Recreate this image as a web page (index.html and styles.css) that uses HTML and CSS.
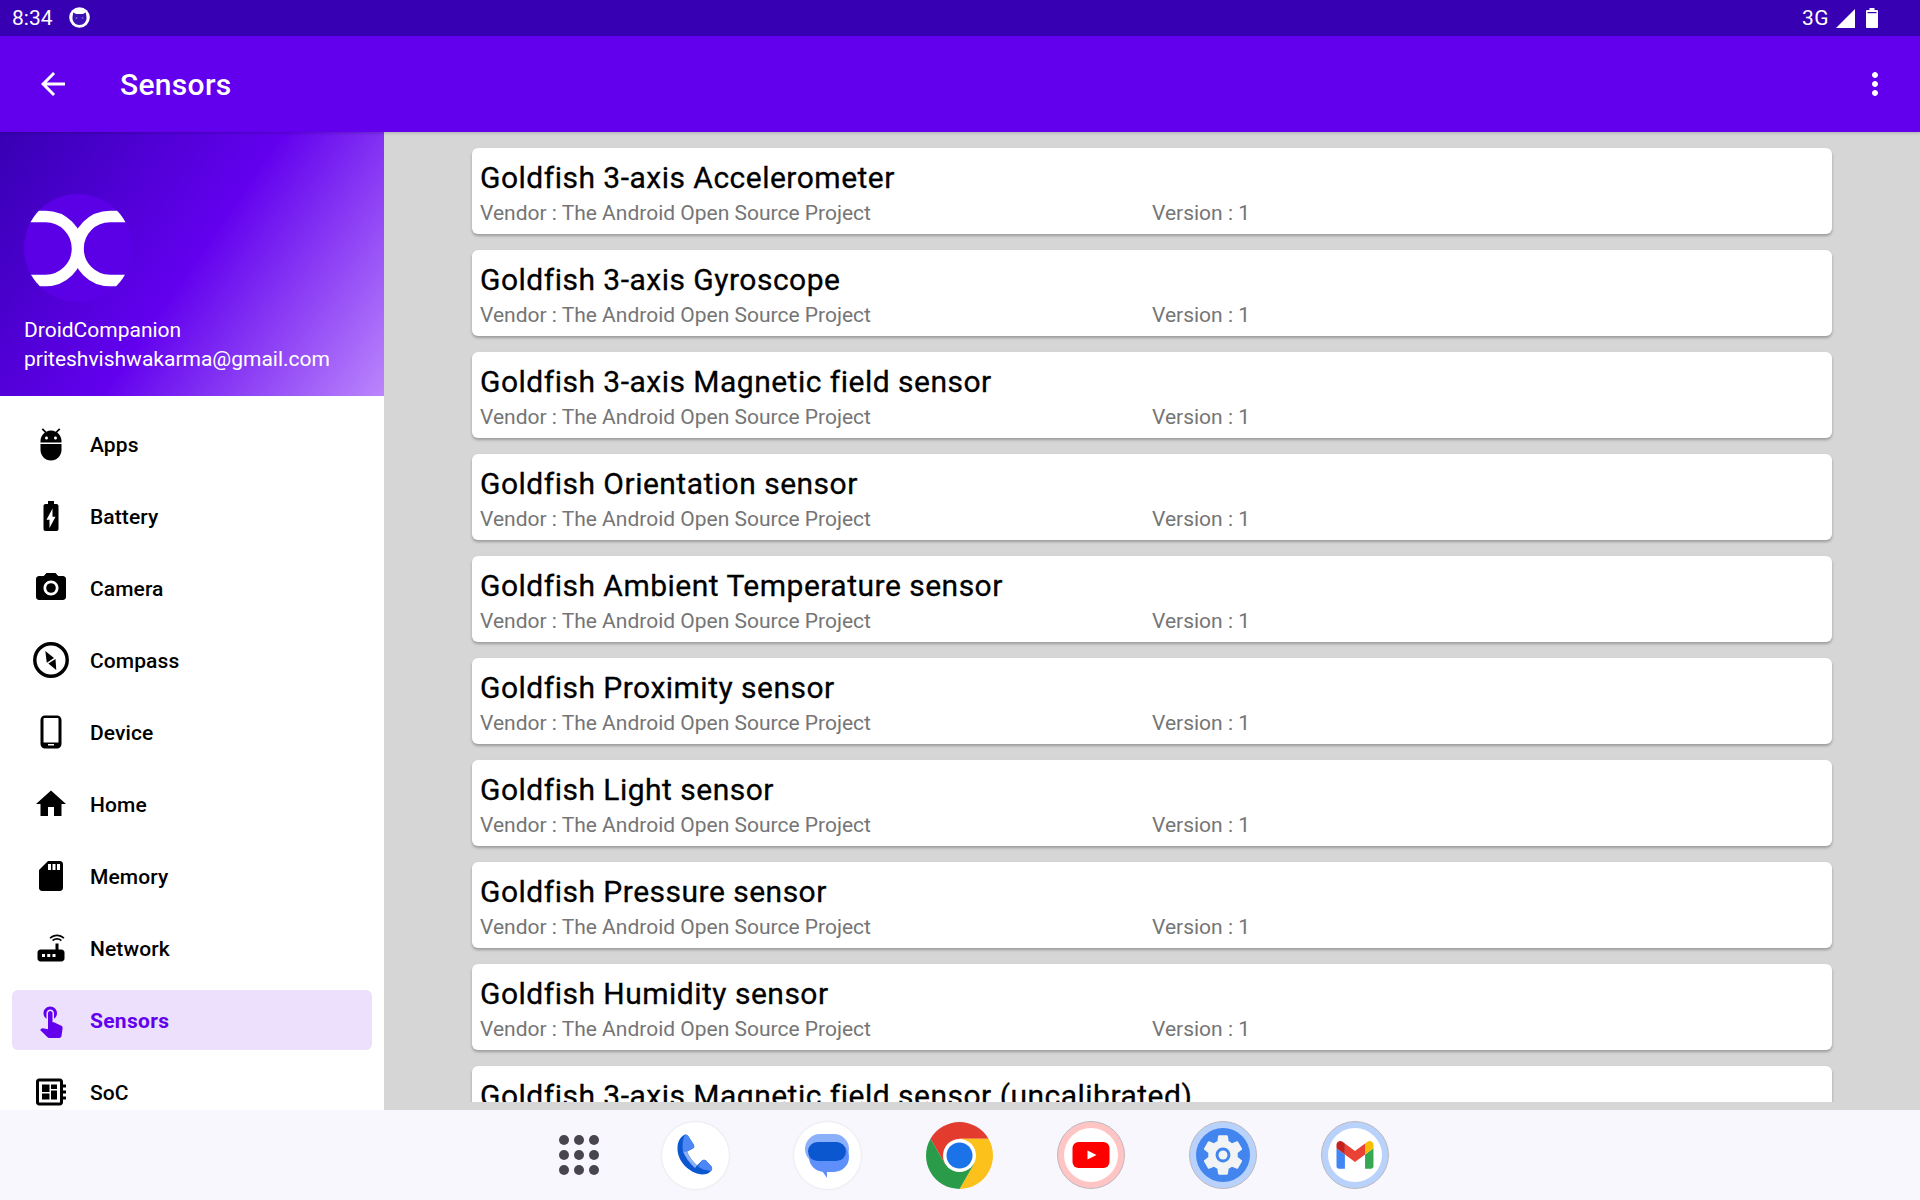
FILE: index.html
```html
<!DOCTYPE html>
<html lang="en">
<head>
<meta charset="utf-8">
<title>Sensors</title>
<link rel="stylesheet" href="styles.css">
</head>
<body>
<div class="statusbar">
  <div class="status-left">
    <span class="status-text">8:34</span>
    <svg class="status-app" viewBox="0 0 21 21"><circle cx="10.500" cy="10.500" r="10.300" fill="#fff"/><path d="M3.500 10l.7-4.500 3 1.500h6.600l3-1.500.7 4.500c.5 4.500-3 8-7 8s-7.500-3.500-7-8z" fill="#3d12b4"/><circle cx="7.500" cy="11" r="1" fill="#7a5fd0"/><circle cx="13.500" cy="11" r="1" fill="#7a5fd0"/></svg>
  </div>
  <div class="status-right">
    <span class="status-text status-net">3G</span>
    <svg class="status-signal" viewBox="0 0 19 19"><path d="M19 0v19H0z" fill="#fff"/></svg>
    <svg class="status-battery" viewBox="0 0 12 20"><path d="M3.500 0h5v2H11a1 1 0 0 1 1 1v16a1 1 0 0 1-1 1H1a1 1 0 0 1-1-1V3a1 1 0 0 1 1-1h2.500z" fill="#fff"/><rect x="1.500" y="4" width="9" height="1.200" fill="#3700b3"/></svg>
  </div>
</div>
<header class="toolbar">
  <svg class="tool-icon" viewBox="0 0 24 24"><path d="M20 11H7.830l5.590-5.590L12 4l-8 8 8 8 1.410-1.410L7.830 13H20v-2z"/></svg>
  <h1 class="tool-title">Sensors</h1>
  <svg class="tool-icon" viewBox="0 0 24 24"><path d="M12 8c1.100 0 2-.9 2-2s-.9-2-2-2-2 .9-2 2 .9 2 2 2zm0 2c-1.100 0-2 .9-2 2s.9 2 2 2 2-.9 2-2-.9-2-2-2zm0 6c-1.100 0-2 .9-2 2s.9 2 2 2 2-.9 2-2-.9-2-2-2z"/></svg>
</header>
<div class="content">
  <aside class="drawer">
    <div class="drawer-head">
      <svg class="avatar" viewBox="0 0 108 108">
        <defs><clipPath id="avatarClip"><circle cx="54" cy="54" r="54"/></clipPath></defs>
        <circle cx="54" cy="54" r="54" fill="#5b00e6"/>
        <g clip-path="url(#avatarClip)" fill="none" stroke="#fff" stroke-width="11.500">
          <path d="M-2 22.500H21.500a32 32 0 0 1 0 64H-2"/>
          <path d="M110 22.500H86a32 32 0 0 0 0 64H110"/>
        </g>
      </svg>
      <div class="head-name">DroidCompanion</div>
      <div class="head-mail">priteshvishwakarma@gmail.com</div>
    </div>
    <nav class="nav">
      <div class="nav-item"><svg class="nav-icon" viewBox="0 0 24 24"><path d="M5 16c0 3.870 3.130 7 7 7s7-3.130 7-7v-4H5v4zM16.120 4.370l2.100-2.100-.82-.83-2.300 2.310C14.160 3.280 13.120 3 12 3s-2.160.28-3.090.75L6.600 1.440l-.82.83 2.100 2.100C6.140 5.640 5 7.680 5 10v1h14v-1c0-2.320-1.140-4.360-2.880-5.630zM9 9c-.55 0-1-.45-1-1s.45-1 1-1 1 .45 1 1-.45 1-1 1zm6 0c-.55 0-1-.45-1-1s.45-1 1-1 1 .45 1 1-.45 1-1 1z"/></svg><span class="nav-label">Apps</span></div>
      <div class="nav-item"><svg class="nav-icon" viewBox="0 0 24 24"><path d="M15.670 4H14V2h-4v2H8.330C7.600 4 7 4.600 7 5.330v15.330C7 21.400 7.600 22 8.330 22h7.330c.74 0 1.340-.6 1.340-1.330V5.330C17 4.600 16.400 4 15.670 4zM11 20v-5.500H9L13 7v5.500h2L11 20z"/></svg><span class="nav-label">Battery</span></div>
      <div class="nav-item"><svg class="nav-icon" viewBox="0 0 24 24"><circle cx="12" cy="12" r="3.200"/><path d="M9 2L7.170 4H4c-1.100 0-2 .9-2 2v12c0 1.100.9 2 2 2h16c1.100 0 2-.9 2-2V6c0-1.100-.9-2-2-2h-3.170L15 2H9zm3 15c-2.760 0-5-2.240-5-5s2.240-5 5-5 5 2.240 5 5-2.240 5-5 5z"/></svg><span class="nav-label">Camera</span></div>
      <div class="nav-item"><svg class="nav-icon" viewBox="0 0 24 24"><circle cx="12" cy="12" r="10.800" fill="none" stroke="#000" stroke-width="2.300"/><path d="M8.200 6l5.800 4.600-4.800 3.200zM15.500 18.600l-5.300-4.200 4.800-3z"/></svg><span class="nav-label">Compass</span></div>
      <div class="nav-item"><svg class="nav-icon" viewBox="0 0 24 24"><path d="M16 1H8C6.340 1 5 2.340 5 4v16c0 1.660 1.340 3 3 3h8c1.660 0 3-1.340 3-3V4c0-1.660-1.340-3-3-3zm-2 20h-4v-1h4v1zm3-2H7V3.300c0-.3.300-.6.600-.6h8.800c.3 0 .6.300.6.600V19z"/></svg><span class="nav-label">Device</span></div>
      <div class="nav-item"><svg class="nav-icon" viewBox="0 0 24 24"><path d="M10 20v-6h4v6h5v-8h3L12 3 2 12h3v8z"/></svg><span class="nav-label">Home</span></div>
      <div class="nav-item"><svg class="nav-icon" viewBox="0 0 24 24"><path d="M18 2h-8L4.020 8 4 20c0 1.100.9 2 2 2h12c1.100 0 2-.9 2-2V4c0-1.100-.9-2-2-2zm-6 6h-2V4h2v4zm3 0h-2V4h2v4zm3 0h-2V4h2v4z"/></svg><span class="nav-label">Memory</span></div>
      <div class="nav-item"><svg class="nav-icon" viewBox="0 0 24 24"><path d="M20.200 5.900l.8-.8C19.600 3.700 17.800 3 16 3s-3.600.7-5 2.100l.8.8C13 4.800 14.500 4.200 16 4.200s3 .6 4.200 1.700zm-.9.8c-.9-.9-2.100-1.400-3.300-1.400s-2.400.5-3.300 1.400l.8.8c.7-.7 1.600-1 2.500-1 .9 0 1.800.3 2.500 1l.8-.8zM19 13h-2V9h-2v4H5c-1.100 0-2 .9-2 2v4c0 1.100.9 2 2 2h14c1.100 0 2-.9 2-2v-4c0-1.100-.9-2-2-2zM8 18H6v-2h2v2zm3.500 0h-2v-2h2v2zm3.500 0h-2v-2h2v2z"/></svg><span class="nav-label">Network</span></div>
      <div class="nav-item nav-active"><svg class="nav-icon" viewBox="0 0 24 24"><path d="M9 11.240V7.500C9 6.120 10.120 5 11.500 5S14 6.120 14 7.500v3.740c1.210-.81 2-2.180 2-3.740C16 5.010 13.990 3 11.500 3S7 5.010 7 7.500c0 1.560.79 2.930 2 3.740zm9.840 4.630l-4.540-2.260c-.17-.07-.35-.11-.54-.11H13v-6c0-.83-.67-1.500-1.500-1.500S10 6.670 10 7.500v10.740l-3.430-.72c-.08-.01-.15-.03-.24-.03-.31 0-.59.13-.79.33l-.79.8 4.940 4.940c.27.27.65.44 1.060.44h6.790c.75 0 1.330-.55 1.440-1.280l.75-5.270c.01-.07.02-.14.02-.2 0-.62-.38-1.160-.91-1.380z"/></svg><span class="nav-label">Sensors</span></div>
      <div class="nav-item"><svg class="nav-icon" viewBox="0 0 24 24"><path d="M22 9V7h-2V5c0-1.100-.9-2-2-2H4c-1.100 0-2 .9-2 2v14c0 1.100.9 2 2 2h14c1.100 0 2-.9 2-2v-2h2v-2h-2v-2h2v-2h-2V9h2zm-4 10H4V5h14v14zM6 13h5v4H6zm6-6h4v3h-4zM6 7h5v5H6zm6 4h4v6h-4z"/></svg><span class="nav-label">SoC</span></div>
    </nav>
  </aside>
  <main class="list">
    <article class="card"><h2 class="card-title">Goldfish 3-axis Accelerometer</h2><div class="card-meta"><span class="meta-vendor">Vendor : The Android Open Source Project</span><span>Version : 1</span></div></article>
    <article class="card"><h2 class="card-title">Goldfish 3-axis Gyroscope</h2><div class="card-meta"><span class="meta-vendor">Vendor : The Android Open Source Project</span><span>Version : 1</span></div></article>
    <article class="card"><h2 class="card-title">Goldfish 3-axis Magnetic field sensor</h2><div class="card-meta"><span class="meta-vendor">Vendor : The Android Open Source Project</span><span>Version : 1</span></div></article>
    <article class="card"><h2 class="card-title">Goldfish Orientation sensor</h2><div class="card-meta"><span class="meta-vendor">Vendor : The Android Open Source Project</span><span>Version : 1</span></div></article>
    <article class="card"><h2 class="card-title">Goldfish Ambient Temperature sensor</h2><div class="card-meta"><span class="meta-vendor">Vendor : The Android Open Source Project</span><span>Version : 1</span></div></article>
    <article class="card"><h2 class="card-title">Goldfish Proximity sensor</h2><div class="card-meta"><span class="meta-vendor">Vendor : The Android Open Source Project</span><span>Version : 1</span></div></article>
    <article class="card"><h2 class="card-title">Goldfish Light sensor</h2><div class="card-meta"><span class="meta-vendor">Vendor : The Android Open Source Project</span><span>Version : 1</span></div></article>
    <article class="card"><h2 class="card-title">Goldfish Pressure sensor</h2><div class="card-meta"><span class="meta-vendor">Vendor : The Android Open Source Project</span><span>Version : 1</span></div></article>
    <article class="card"><h2 class="card-title">Goldfish Humidity sensor</h2><div class="card-meta"><span class="meta-vendor">Vendor : The Android Open Source Project</span><span>Version : 1</span></div></article>
    <article class="card"><h2 class="card-title">Goldfish 3-axis Magnetic field sensor (uncalibrated)</h2><div class="card-meta"><span class="meta-vendor">Vendor : The Android Open Source Project</span><span>Version : 1</span></div></article>
  </main>
</div>
<footer class="dock">
  <svg class="dock-all" viewBox="0 0 40 40" fill="#49454f">
    <circle cx="5" cy="5" r="5"/><circle cx="20" cy="5" r="5"/><circle cx="35" cy="5" r="5"/>
    <circle cx="5" cy="20" r="5"/><circle cx="20" cy="20" r="5"/><circle cx="35" cy="20" r="5"/>
    <circle cx="5" cy="35" r="5"/><circle cx="20" cy="35" r="5"/><circle cx="35" cy="35" r="5"/>
  </svg>
  <svg class="dock-app dock-plain" viewBox="0 0 67 67">
    <circle cx="33.500" cy="33.500" r="33.500" fill="#fff"/>
    <path fill="#0b57d0" d="M23 12.500Q25 12.200 26.500 14.500L32 23Q33 25 31 26.500L25 29.500Q28 37 35 43.500L40 38.500Q42 37 44 38.500L49.500 44.500Q51 47 49 49Q46 52.500 40 52.500C26 51 15 38 15.500 26C15.500 20 18 15 23 12.500Z"/>
    <path fill="#4d87f6" d="M23 12.500Q25 12.200 26.500 14.500L32 23Q33 25 31 26.500L25 29.500L21 29.500Q19.500 19 23 12.500Z"/>
    <path fill="#4d87f6" d="M40 38.500Q42 37 44 38.500L49.500 44.500Q51 47 49 49L41 47.500L36 44.500Z"/>
    <path fill="#8ab0f8" d="M21 29.500L25 29.500Q28 37 35 43.500L33 46Q25 39 21 29.500Z"/>
  </svg>
  <svg class="dock-app dock-plain" viewBox="0 0 67 67">
    <circle cx="33.500" cy="33.500" r="33.500" fill="#fff"/>
    <rect x="11" y="12" width="44" height="30" rx="15" fill="#8ab0fc"/>
    <path d="M26 46h7v10z" fill="#5e8ffa"/>
    <rect x="15" y="20" width="40" height="30" rx="15" fill="#5e8ffa"/>
    <rect x="14" y="20" width="38" height="19" rx="9.500" fill="#0b57d0"/>
  </svg>
  <svg class="dock-app" viewBox="-33.500 -33.500 67 67">
    <path d="M-29 -16.750A33.500 33.500 0 0 1 29 -16.750L0 -16.750L-14.500 8.400Z" fill="#e33b2e"/>
    <path d="M29 -16.750A33.500 33.500 0 0 1 0 33.500L14.500 8.400L0 -16.750Z" fill="#fcc11a"/>
    <path d="M0 33.500A33.500 33.500 0 0 1 -29 -16.750L-14.500 8.400L14.500 8.400Z" fill="#2a9b49"/>
    <circle r="16.500" fill="#fff"/><circle r="13" fill="#1a73e8"/>
  </svg>
  <svg class="dock-app dock-ringed" viewBox="0 0 68 68">
    <circle cx="34" cy="34" r="33.500" fill="#ffc4c4" stroke="#bdb9bd"/>
    <circle cx="34" cy="34" r="27" fill="#fff"/>
    <rect x="15.500" y="21" width="37" height="26" rx="6" fill="#f00"/>
    <path d="M30.500 29.500L39.500 34l-9 4.500z" fill="#fff"/>
  </svg>
  <svg class="dock-app dock-ringed" viewBox="0 0 68 68">
    <circle cx="34" cy="34" r="33.500" fill="#b9d2fb" stroke="#bdb9bd"/>
    <circle cx="34" cy="34" r="27" fill="#4285ee"/>
    <g transform="translate(9.400 9.400) scale(2.050)"><path fill="#f1f3f4" d="M19.140 12.940c.04-.3.06-.61.06-.94 0-.32-.02-.64-.07-.94l2.030-1.580c.18-.14.23-.41.12-.61l-1.920-3.320c-.12-.22-.37-.29-.59-.22l-2.390.96c-.5-.38-1.030-.7-1.620-.94l-.36-2.540c-.04-.24-.24-.41-.48-.41h-3.840c-.24 0-.43.17-.47.41l-.36 2.540c-.59.24-1.130.57-1.620.94l-2.390-.96c-.22-.08-.47 0-.59.22L2.740 8.870c-.12.21-.08.47.12.61l2.030 1.580c-.05.3-.09.63-.09.94s.02.64.07.94l-2.030 1.580c-.18.14-.23.41-.12.61l1.920 3.320c.12.22.37.29.59.22l2.390-.96c.5.38 1.030.7 1.620.94l.36 2.540c.05.24.24.41.48.41h3.840c.24 0 .44-.17.47-.41l.36-2.540c.59-.24 1.130-.56 1.620-.94l2.390.96c.22.08.47 0 .59-.22l1.920-3.320c.12-.22.07-.47-.12-.61l-2.010-1.580zM12 15.600c-1.980 0-3.600-1.620-3.600-3.600s1.620-3.600 3.600-3.600 3.600 1.620 3.600 3.600-1.620 3.600-3.600 3.600z"/><circle cx="12" cy="12" r="2.200" fill="#f1f3f4"/></g>
  </svg>
  <svg class="dock-app dock-ringed" viewBox="0 0 68 68">
    <circle cx="34" cy="34" r="33.500" fill="#b9d2fb" stroke="#bdb9bd"/>
    <circle cx="34" cy="34" r="27" fill="#fff"/>
    <g transform="translate(15.500 20) scale(.42)" >
      <g transform="translate(-52 -42)">
        <path fill="#4285f4" d="M58 108h14V74L52 59v43c0 3.320 2.690 6 6 6"/>
        <path fill="#34a853" d="M120 108h14c3.320 0 6-2.690 6-6V59l-20 15"/>
        <path fill="#fbbc04" d="M120 48v26l20-15v-8c0-7.420-8.470-11.650-14.400-7.200"/>
        <path fill="#ea4335" d="M72 74V48l24 18 24-18v26L96 92"/>
        <path fill="#c5221f" d="M52 51v8l20 15V48l-5.600-4.200c-5.940-4.450-14.400-.22-14.400 7.200"/>
      </g>
    </g>
  </svg>
</footer>
</body>
</html>
```
FILE: styles.css
```css
* { box-sizing: border-box; margin: 0; padding: 0; }
html, body { height: 100%; }
body {
  width: 1920px;
  height: 1200px;
  display: flex;
  flex-direction: column;
  overflow: hidden;
  font-family: Roboto, "Liberation Sans", sans-serif;
  background: #d6d6d6;
}
.statusbar {
  height: 36px;
  flex: none;
  background: #3700b3;
  color: #fff;
  display: flex;
  justify-content: space-between;
  align-items: center;
  padding: 0 42px 0 12px;
}
.status-left, .status-right { display: flex; align-items: center; }
.status-text { font-size: 21px; line-height: 36px; }
.status-net { letter-spacing: .4px; }
.status-app { width: 21px; height: 21px; margin-left: 16px; margin-top: -1px; }
.status-signal { width: 19px; height: 19px; margin-left: 7px; }
.status-battery { width: 12px; height: 20px; margin-left: 11px; }
.toolbar {
  height: 96px;
  flex: none;
  background: #6200ee;
  color: #fff;
  display: flex;
  align-items: center;
  padding: 0 27px 0 35px;
  position: relative;
  z-index: 2;
  box-shadow: 0 1px 3px rgba(0,0,0,.2);
}
.tool-icon { width: 36px; height: 36px; fill: #fff; flex: none; }
.tool-title { flex: 1; margin-left: 49px; padding-top: 2px; font-size: 30px; font-weight: 500; line-height: 36px; letter-spacing: .3px; }
.content { flex: 1; min-height: 0; display: flex; }
.drawer {
  width: 384px;
  flex: none;
  background: #fff;
  display: flex;
  flex-direction: column;
  overflow: hidden;
}
.drawer-head {
  height: 264px;
  flex: none;
  padding: 62px 24px 0;
  color: #fff;
  font-size: 21px;
  line-height: 29px;
  background: linear-gradient(124.5deg, #3700b3 0%, #6200ee 50%, #bb86fc 100%);
}
.avatar { display: block; width: 108px; height: 108px; margin-bottom: 14px; }
.nav { padding: 18px 12px 0; display: flex; flex-direction: column; gap: 12px; }
.nav-item {
  height: 60px;
  flex: none;
  display: flex;
  align-items: center;
  gap: 21px;
  padding-left: 21px;
  border-radius: 6px;
  font-size: 21px;
  font-weight: 500;
  letter-spacing: .1px;
  color: #000;
}
.nav-label { padding-top: 2px; }
.nav-icon { width: 36px; height: 36px; fill: currentColor; flex: none; }
.nav-active { background: #ece0fd; color: #6200ee; font-weight: 700; letter-spacing: .3px; }
.list {
  flex: 1;
  min-width: 0;
  margin-bottom: 8px;
  padding: 16px 88px 0;
  display: flex;
  flex-direction: column;
  gap: 16px;
  overflow: hidden;
}
.card {
  height: 86px;
  flex: none;
  background: #fff;
  border-radius: 6px;
  padding: 9px 8px 0;
  box-shadow: 0 2px 3px rgba(0,0,0,.28);
}
.card-title { font-size: 30px; font-weight: 400; line-height: 42px; color: #000; letter-spacing: .49px; -webkit-text-stroke: .3px #000; }
.card-meta { display: flex; font-size: 21px; line-height: 28px; color: #757575; }
.meta-vendor { width: 672px; }
.dock {
  height: 90px;
  flex: none;
  background: #f8f7fe;
  display: flex;
  align-items: center;
  justify-content: center;
  gap: 65px;
  padding-left: 13px;
  position: relative;
  z-index: 2;
}
.dock-all { width: 40px; height: 40px; margin: 0 -2.500px 0 15px; }
.dock-app { width: 67px; height: 67px; flex: none; }
.dock-plain { filter: drop-shadow(0 0 1px rgba(0,0,0,.12)); }
.dock-ringed { width: 68px; height: 68px; margin: 0 -.5px; }
```
